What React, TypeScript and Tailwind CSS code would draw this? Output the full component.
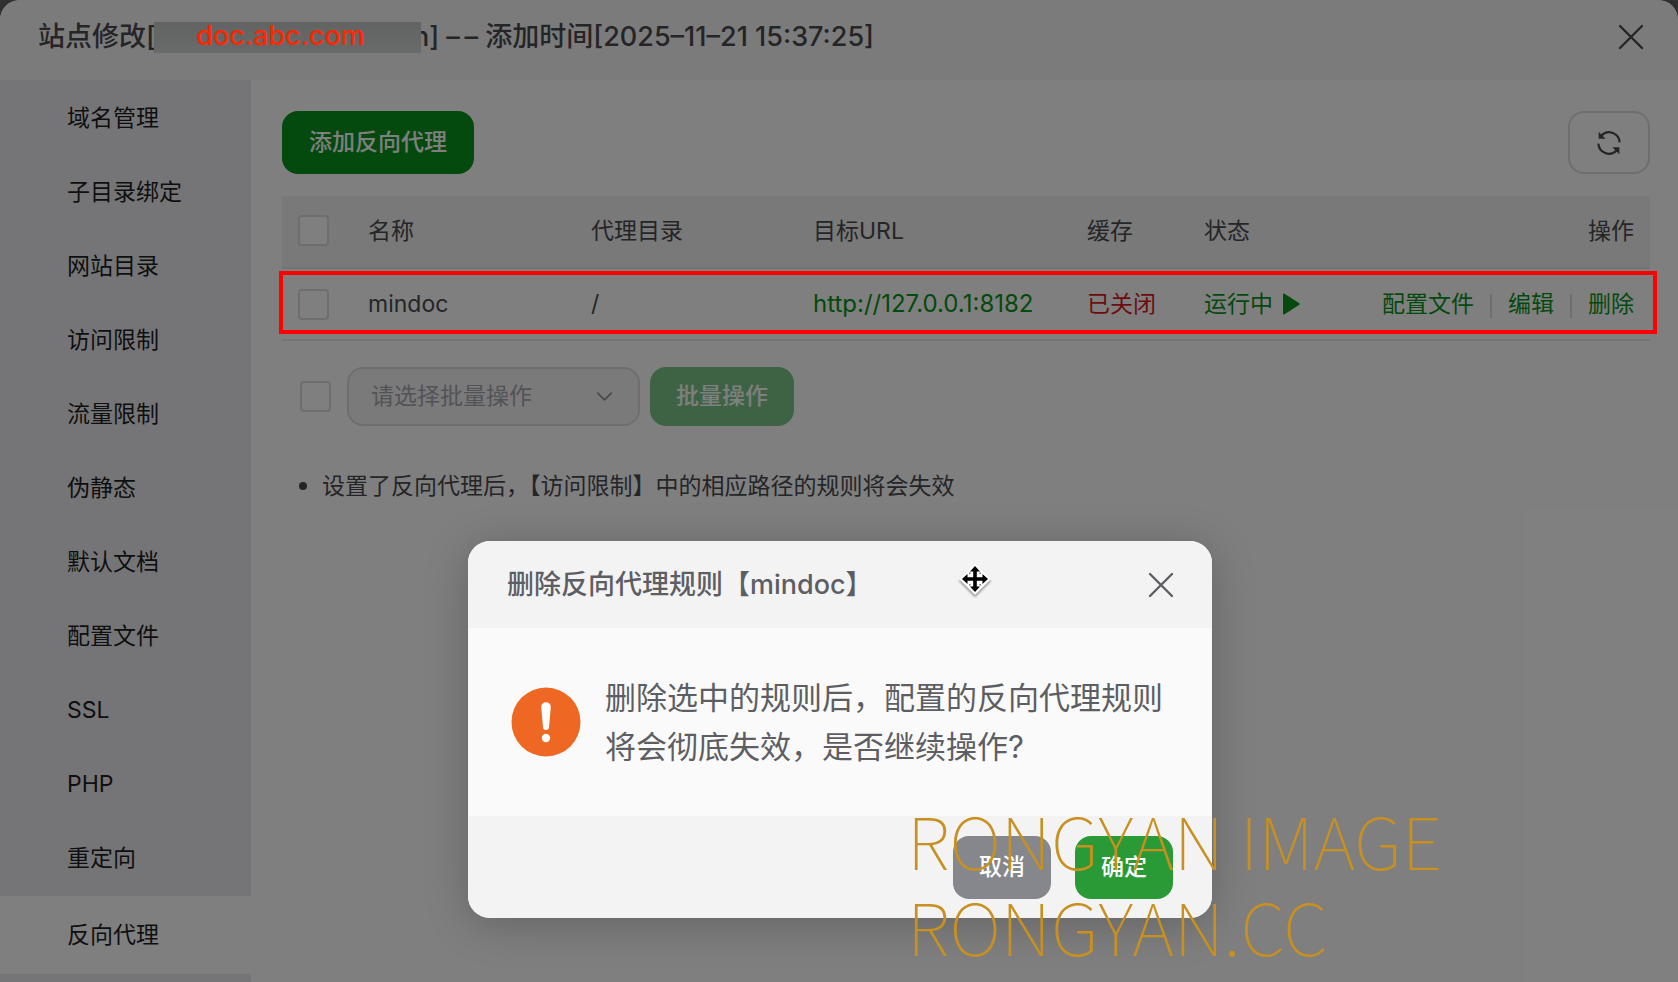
import { ChevronDown } from 'lucide-react'
import React, { useState } from 'react'

const menus = [
  '域名管理',
  '子目录绑定',
  '网站目录',
  '访问限制',
  '流量限制',
  '伪静态',
  '默认文档',
  '配置文件',
  'SSL',
  'PHP',
  '重定向',
  '反向代理',
]

const checkboxClass =
  'block size-[31px] appearance-none rounded-[4px] border-2 border-[#dcdce2] bg-white checked:bg-[#08921a]'

const CloseIcon = () => (
  <svg viewBox="0 0 26 26" className="size-[26px]" fill="none" stroke="currentColor" strokeWidth="2.4" strokeLinecap="round">
    <path d="M2 2l22 22M24 2L2 24" />
  </svg>
)

const RefreshIcon = () => (
  <svg viewBox="0 0 26 26" className="size-[26px]" fill="none" stroke="currentColor" strokeWidth="2.2">
    <path d="M5.5 5.6A10.5 10.5 0 0 1 23.6 12.4" />
    <path d="M20.5 20.4A10.5 10.5 0 0 1 2.4 13.6" />
    <path d="M2.6 1.8v7h7z" fill="currentColor" stroke="none" />
    <path d="M23.4 24.2v-7h-7z" fill="currentColor" stroke="none" />
  </svg>
)

const MoveCursor = () => (
  <svg viewBox="0 0 36 36" className="size-9 drop-shadow-[0_2px_1px_rgba(0,0,0,0.4)]">
    <path d="M18 2L34 18L18 34L2 18z" fill="#fff" />
    <path
      d="M18 5l5 5.5h-3.2v5.7H25.5v-3.2l5.5 5-5.5 5v-3.2h-5.7v5.7H23L18 31l-5-5.5h3.2v-5.7h-5.7v3.2L5 18l5.5-5v3.2h5.7v-5.7H13z"
      fill="#000"
    />
    <path d="M12 11.5h1.5v1.5H12zM22.5 11.5H24v1.5h-1.5zM12 23h1.5v1.5H12zM22.5 23H24v1.5h-1.5z" fill="#777" />
  </svg>
)

const WarningIcon = () => (
  <svg viewBox="0 0 70 70" className="size-[70px] shrink-0">
    <circle cx="35" cy="35" r="34.5" fill="#ee6723" />
    <path d="M30.2 20a4.8 4.8 0 0 1 9.6 0l-1.8 20a3 3 0 0 1-6 0z" fill="#fff" />
    <circle cx="35" cy="51" r="4.2" fill="#fff" />
  </svg>
)

const App: React.FC = () => {
  const [active, setActive] = useState('反向代理')
  const [open, setOpen] = useState(true)

  return (
    <div className="relative h-screen overflow-hidden bg-[#606060] font-[Inter,'Noto_Sans_CJK_SC',sans-serif] text-[23px] leading-[34px] text-[#4a4b50]">
      <div className="flex h-full flex-col overflow-hidden rounded-t-[20px] bg-white">
        <header className="flex h-20 shrink-0 items-center justify-between bg-[#f7f7f7] pr-[34px] pb-1.5 pl-[38px]">
          <h1 className="flex items-center text-[27px] font-medium whitespace-pre">
            站点修改[
            <span className="h-[31px] w-[267px]" />
            <span className="-ml-2.5">n] –&#8202;&#8202;– 添加时间[2025–11–21 15:37:25]</span>
          </h1>
          <button aria-label="关闭" className="text-[#4a4b50]">
            <CloseIcon />
          </button>
        </header>

        <div className="flex min-h-0 flex-1">
          <nav className="w-[251px] shrink-0 overflow-hidden bg-[#ebebef] pt-px text-[#1d1e20]">
            {menus.map((menu) => (
              <button
                key={menu}
                onClick={() => setActive(menu)}
                className={`flex w-full items-center pl-[67px] text-left ${
                  active === menu ? 'mt-px h-[78px] bg-white' : 'h-[74px]'
                }`}
              >
                {menu}
              </button>
            ))}
          </nav>

          <main className="min-w-0 flex-1 pt-[31px] pr-7 pl-[31px]">
            <div className="flex items-center justify-between">
              <button className="h-[63px] rounded-[16px] bg-[#08921a] px-[27px] pb-0.5 font-medium text-white">
                添加反向代理
              </button>
              <button
                aria-label="刷新"
                className="flex h-[63px] w-[82px] items-center justify-center rounded-[16px] border-2 border-[#dcdce2]"
              >
                <RefreshIcon />
              </button>
            </div>

            <table className="mt-[22px] w-full table-fixed text-left">
              <colgroup>
                <col className="w-[70px]" />
                <col className="w-[223px]" />
                <col className="w-[222px]" />
                <col className="w-[274px]" />
                <col className="w-[117px]" />
                <col className="w-[120px]" />
                <col />
              </colgroup>
              <thead>
                <tr className="h-[72px] border-b-2 border-[#e6e6ea] bg-[#f2f2f3]">
                  <th className="pb-0.5 pl-4">
                    <input type="checkbox" aria-label="全选" className={checkboxClass} />
                  </th>
                  <th className="pb-0.5 pl-4 font-normal">名称</th>
                  <th className="pb-0.5 pl-4 font-normal">代理目录</th>
                  <th className="pb-0.5 pl-4 font-normal">目标URL</th>
                  <th className="pb-0.5 pl-4 font-normal">缓存</th>
                  <th className="pb-0.5 pl-4 font-normal">状态</th>
                  <th className="pr-4 pb-0.5 text-right font-normal">操作</th>
                </tr>
              </thead>
              <tbody>
                <tr className="h-[72px] border-b-2 border-[#e6e6ea]">
                  <td className="pl-4">
                    <input type="checkbox" aria-label="选择 mindoc" className={checkboxClass} />
                  </td>
                  <td className="pl-4">mindoc</td>
                  <td className="pl-4">/</td>
                  <td className="pl-4">
                    <a href="http://127.0.0.1:8182" className="text-[24px] text-[#08921a]">
                      http://127.0.0.1:8182
                    </a>
                  </td>
                  <td className="pl-4 whitespace-nowrap">
                    <button className="text-[#d8191d]">已关闭</button>
                  </td>
                  <td className="pl-4 whitespace-nowrap">
                    <button className="flex items-center gap-2.5 text-[#08921a]">
                      运行中
                      <svg viewBox="0 0 17 22" className="h-[22px] w-[17px] shrink-0" fill="currentColor">
                        <path d="M0 1.5Q0 0 1.5 .8L16 10Q17.5 11 16 12L1.5 21.2Q0 22 0 20.5z" />
                      </svg>
                    </button>
                  </td>
                  <td className="pr-4 whitespace-nowrap">
                    <div className="flex items-center justify-end gap-4 text-[#08921a]">
                      <button>配置文件</button>
                      <span className="mt-1 h-6 w-0.5 bg-[#dcdce2]" />
                      <button>编辑</button>
                      <span className="mt-1 h-6 w-0.5 bg-[#dcdce2]" />
                      <button>删除</button>
                    </div>
                  </td>
                </tr>
              </tbody>
            </table>

            <div className="mt-[26px] flex items-center pl-[18px]">
              <input type="checkbox" aria-label="批量选择" className={checkboxClass} />
              <div className="relative ml-4">
                <select
                  aria-label="批量操作"
                  className="block h-[59px] w-[293px] appearance-none rounded-[16px] border-2 border-[#dcdce2] bg-[#f5f5f6] pb-0.5 pl-[22px] text-[#a5a6ae]"
                >
                  <option>请选择批量操作</option>
                </select>
                <ChevronDown
                  strokeWidth={1.5}
                  className="pointer-events-none absolute top-4 right-[22px] size-[27px] text-[#909199]"
                />
              </div>
              <button className="ml-2.5 h-[59px] rounded-[16px] bg-[#7ac788] px-[26px] pb-0.5 font-medium text-white">
                批量操作
              </button>
            </div>

            <ul className="mt-[43px] pl-[17px]">
              <li className="flex items-center gap-[15px]">
                <span className="size-2 rounded-full bg-[#4a4b50]" />
                设置了反向代理后，【访问限制】中的相应路径的规则将会失效
              </li>
            </ul>
          </main>
        </div>
      </div>

      <div className="absolute inset-0 bg-black/50" />

      {/* notes drawn over the page */}
      <div className="absolute top-[22px] left-[154px] flex h-[31px] w-[267px] justify-center bg-linear-to-b from-[#616462] to-[#686b69] pr-[14px] text-[27px] leading-[27px] font-medium text-[#ff2600]">
        doc.abc.com
      </div>
      <div className="absolute top-[271px] right-[21px] left-[279px] h-[63px] border-4 border-[#fe0000]" />

      {open && (
        <div
          role="dialog"
          aria-labelledby="confirm-title"
          className="absolute top-[541px] left-[468px] w-[744px] overflow-hidden rounded-[22px] bg-[#fafafa] text-[#5d5e63] shadow-[0_6px_44px_rgba(0,0,0,0.22)]"
        >
          <div className="flex h-[87px] items-center justify-between bg-[#f3f3f3] pr-[38px] pl-[39px]">
            <h2 id="confirm-title" className="text-[27px] font-medium">
              删除反向代理规则【mindoc】
            </h2>
            <button aria-label="关闭" onClick={() => setOpen(false)}>
              <CloseIcon />
            </button>
          </div>
          <div className="flex h-[188px] items-center gap-6 pl-[43px]">
            <WarningIcon />
            <p className="text-[31px] leading-[49px] whitespace-nowrap">
              删除选中的规则后，配置的反向代理规则
              <br />
              将会彻底失效，是否继续操作?
            </p>
          </div>
          <div className="flex h-[102px] items-center justify-end gap-6 bg-[#f3f3f3] pr-[39px] font-medium text-white">
            <button onClick={() => setOpen(false)} className="h-[63px] w-[98px] rounded-[16px] bg-[#85878d]">
              取消
            </button>
            <button onClick={() => setOpen(false)} className="h-[63px] w-[98px] rounded-[16px] bg-[#2a9a36]">
              确定
            </button>
          </div>
        </div>
      )}

      <div className="pointer-events-none absolute top-[561px] left-[957px]">
        <MoveCursor />
      </div>

      <div className="pointer-events-none absolute top-[796px] left-[907px] font-['Noto_Sans_CJK_SC',sans-serif] text-[72px] leading-[86px] font-thin whitespace-nowrap text-[#c89020]">
        RONGYAN IMAGE
        <br />
        RONGYAN.CC
      </div>
    </div>
  )
}

export default App
